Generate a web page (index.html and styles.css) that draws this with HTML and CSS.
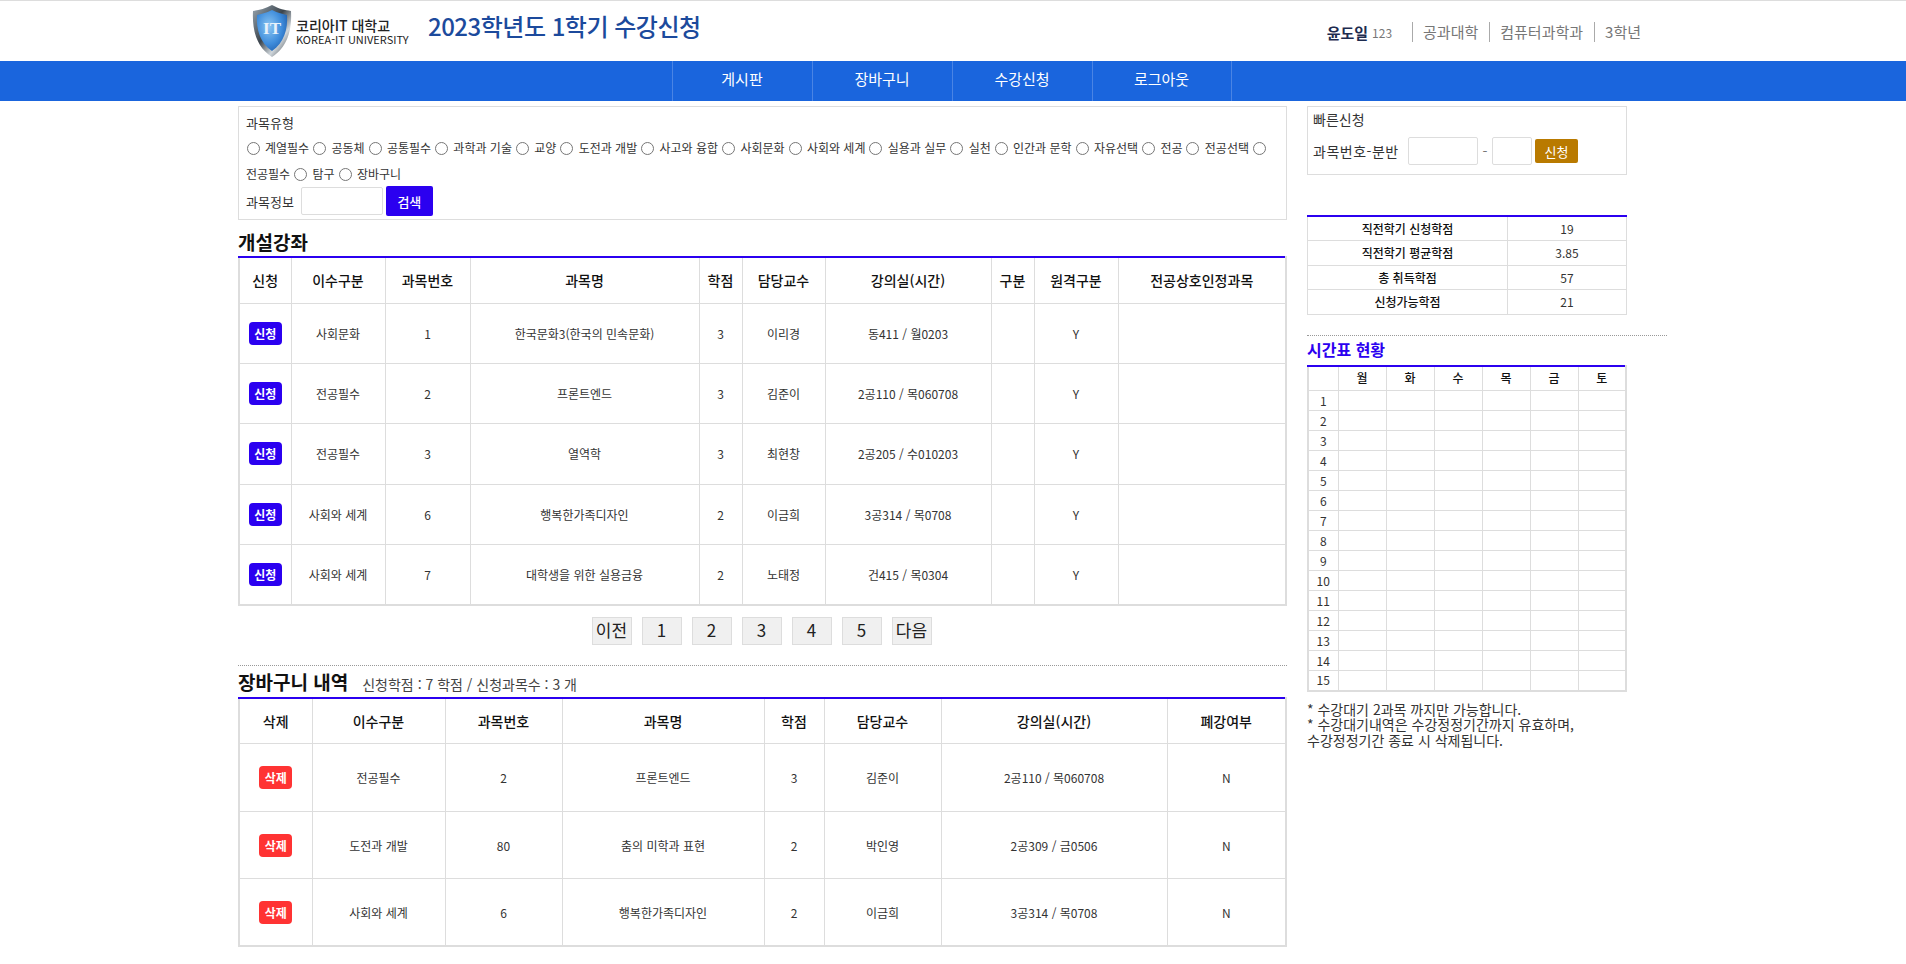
FILE: index.html
```html
<!DOCTYPE html>
<html lang="ko">

<head>
    <meta charset="UTF-8">
    <title>2023학년도 1학기 수강신청</title>
    <link rel="stylesheet" href="styles.css">
</head>

<body>
    <header class="top">
        <div class="wrap top-inner">
            <div class="logo">
                <svg class="shield" viewBox="0 0 40 52" width="40" height="52">
                    <defs>
                        <linearGradient id="metal" x1="0" y1="0" x2="1" y2="1">
                            <stop offset="0" stop-color="#9aa8b3" />
                            <stop offset="0.45" stop-color="#3c454d" />
                            <stop offset="0.7" stop-color="#d0d7dc" />
                            <stop offset="1" stop-color="#23282d" />
                        </linearGradient>
                        <radialGradient id="blue" cx="0.4" cy="0.4" r="0.7">
                            <stop offset="0" stop-color="#8cc6f2" />
                            <stop offset="0.6" stop-color="#3f8ddc" />
                            <stop offset="1" stop-color="#1f5fae" />
                        </radialGradient>
                    </defs>
                    <path d="M20 0 C27 4 33 5 39 6 C40 24 36 42 20 52 C4 42 0 24 1 6 C7 5 13 4 20 0 Z" fill="url(#metal)" />
                    <path d="M20 5 C26 8 31 9 35 10 C36 24 32 38 20 46 C8 38 4 24 5 10 C9 9 14 8 20 5 Z" fill="url(#blue)" />
                    <text x="20" y="29" class="shield-text" text-anchor="middle">IT</text>
                </svg>
                <div class="logo-text">
                    <strong>코리아IT 대학교</strong>
                    <span>KOREA-IT UNIVERSITY</span>
                </div>
            </div>
            <h1 class="page-title">2023학년도 1학기 수강신청</h1>
            <div class="user">
                <b class="user-name">윤도일</b>
                <span class="user-id">123</span>
                <span class="user-item">공과대학</span>
                <span class="user-item">컴퓨터과학과</span>
                <span class="user-item">3학년</span>
            </div>
        </div>
    </header>

    <nav class="nav">
        <a href="#">게시판</a>
        <a href="#">장바구니</a>
        <a href="#">수강신청</a>
        <a href="#">로그아웃</a>
    </nav>

    <div class="wrap content">
        <main class="left">
            <form class="search-box">
                <div class="search-label">과목유형</div>
                <div class="radios">
                    <input type="radio" name="type"> 계열필수
                    <input type="radio" name="type"> 공동체
                    <input type="radio" name="type"> 공통필수
                    <input type="radio" name="type"> 과학과 기술
                    <input type="radio" name="type"> 교양
                    <input type="radio" name="type"> 도전과 개발
                    <input type="radio" name="type"> 사고와 융합
                    <input type="radio" name="type"> 사회문화
                    <input type="radio" name="type"> 사회와 세계
                    <input type="radio" name="type"> 실용과 실무
                    <input type="radio" name="type"> 실천
                    <input type="radio" name="type"> 인간과 문학
                    <input type="radio" name="type"> 자유선택
                    <input type="radio" name="type"> 전공
                    <input type="radio" name="type"> 전공선택
                    <input type="radio" name="type"> 전공필수
                    <input type="radio" name="type"> 탐구
                    <input type="radio" name="type"> 장바구니
                </div>
                <div class="search-row">
                    <span>과목정보</span>
                    <input type="text" class="field field-search">
                    <button type="button" class="btn-search">검색</button>
                </div>
            </form>

            <h2 class="section-title first">개설강좌</h2>
            <table class="grid open-table">
                <thead>
                    <tr>
                        <th class="o1">신청</th>
                        <th class="o2">이수구분</th>
                        <th class="o3">과목번호</th>
                        <th class="o4">과목명</th>
                        <th class="o5">학점</th>
                        <th class="o6">담당교수</th>
                        <th class="o7">강의실(시간)</th>
                        <th class="o8">구분</th>
                        <th class="o9">원격구분</th>
                        <th>전공상호인정과목</th>
                    </tr>
                </thead>
                <tbody>
                    <tr>
                        <td><button class="badge">신청</button></td>
                        <td>사회문화</td>
                        <td>1</td>
                        <td>한국문화3(한국의 민속문화)</td>
                        <td>3</td>
                        <td>이리경</td>
                        <td>동411 / 월0203</td>
                        <td></td>
                        <td>Y</td>
                        <td></td>
                    </tr>
                    <tr>
                        <td><button class="badge">신청</button></td>
                        <td>전공필수</td>
                        <td>2</td>
                        <td>프론트엔드</td>
                        <td>3</td>
                        <td>김준이</td>
                        <td>2공110 / 목060708</td>
                        <td></td>
                        <td>Y</td>
                        <td></td>
                    </tr>
                    <tr>
                        <td><button class="badge">신청</button></td>
                        <td>전공필수</td>
                        <td>3</td>
                        <td>열역학</td>
                        <td>3</td>
                        <td>최현창</td>
                        <td>2공205 / 수010203</td>
                        <td></td>
                        <td>Y</td>
                        <td></td>
                    </tr>
                    <tr>
                        <td><button class="badge">신청</button></td>
                        <td>사회와 세계</td>
                        <td>6</td>
                        <td>행복한가족디자인</td>
                        <td>2</td>
                        <td>이금희</td>
                        <td>3공314 / 목0708</td>
                        <td></td>
                        <td>Y</td>
                        <td></td>
                    </tr>
                    <tr>
                        <td><button class="badge">신청</button></td>
                        <td>사회와 세계</td>
                        <td>7</td>
                        <td>대학생을 위한 실용금융</td>
                        <td>2</td>
                        <td>노태정</td>
                        <td>건415 / 목0304</td>
                        <td></td>
                        <td>Y</td>
                        <td></td>
                    </tr>
                </tbody>
            </table>

            <div class="pager">
                <a href="#">이전</a>
                <a href="#">1</a>
                <a href="#">2</a>
                <a href="#">3</a>
                <a href="#">4</a>
                <a href="#">5</a>
                <a href="#">다음</a>
            </div>

            <hr class="dots">

            <div class="cart-head">
                <h2 class="section-title">장바구니 내역</h2>
                <span class="cart-sum">신청학점 : 7 학점 / 신청과목수 : 3 개</span>
            </div>
            <table class="grid cart-table">
                <thead>
                    <tr>
                        <th class="c1">삭제</th>
                        <th class="c2">이수구분</th>
                        <th class="c3">과목번호</th>
                        <th class="c4">과목명</th>
                        <th class="c5">학점</th>
                        <th class="c6">담당교수</th>
                        <th class="c7">강의실(시간)</th>
                        <th>폐강여부</th>
                    </tr>
                </thead>
                <tbody>
                    <tr>
                        <td><button class="badge badge-red">삭제</button></td>
                        <td>전공필수</td>
                        <td>2</td>
                        <td>프론트엔드</td>
                        <td>3</td>
                        <td>김준이</td>
                        <td>2공110 / 목060708</td>
                        <td>N</td>
                    </tr>
                    <tr>
                        <td><button class="badge badge-red">삭제</button></td>
                        <td>도전과 개발</td>
                        <td>80</td>
                        <td>춤의 미학과 표현</td>
                        <td>2</td>
                        <td>박인영</td>
                        <td>2공309 / 금0506</td>
                        <td>N</td>
                    </tr>
                    <tr>
                        <td><button class="badge badge-red">삭제</button></td>
                        <td>사회와 세계</td>
                        <td>6</td>
                        <td>행복한가족디자인</td>
                        <td>2</td>
                        <td>이금희</td>
                        <td>3공314 / 목0708</td>
                        <td>N</td>
                    </tr>
                </tbody>
            </table>
        </main>

        <aside class="right">
            <div class="quick-box">
                <div class="quick-title">빠른신청</div>
                <div class="quick-row">
                    <span class="quick-label">과목번호-분반</span>
                    <input type="text" class="field field-no">
                    <span class="quick-dash">-</span>
                    <input type="text" class="field field-class">
                    <button type="button" class="btn-quick">신청</button>
                </div>
            </div>

            <table class="stats">
                <tr>
                    <th>직전학기 신청학점</th>
                    <td>19</td>
                </tr>
                <tr>
                    <th>직전학기 평균학점</th>
                    <td>3.85</td>
                </tr>
                <tr>
                    <th>총 취득학점</th>
                    <td>57</td>
                </tr>
                <tr>
                    <th>신청가능학점</th>
                    <td>21</td>
                </tr>
            </table>

            <hr class="dots">

            <h3 class="time-title">시간표 현황</h3>
            <table class="timetable">
                <thead>
                    <tr><th class="t0"></th><th>월</th><th>화</th><th>수</th><th>목</th><th>금</th><th>토</th></tr>
                </thead>
                <tbody>
                    <tr><td>1</td><td></td><td></td><td></td><td></td><td></td><td></td></tr>
                    <tr><td>2</td><td></td><td></td><td></td><td></td><td></td><td></td></tr>
                    <tr><td>3</td><td></td><td></td><td></td><td></td><td></td><td></td></tr>
                    <tr><td>4</td><td></td><td></td><td></td><td></td><td></td><td></td></tr>
                    <tr><td>5</td><td></td><td></td><td></td><td></td><td></td><td></td></tr>
                    <tr><td>6</td><td></td><td></td><td></td><td></td><td></td><td></td></tr>
                    <tr><td>7</td><td></td><td></td><td></td><td></td><td></td><td></td></tr>
                    <tr><td>8</td><td></td><td></td><td></td><td></td><td></td><td></td></tr>
                    <tr><td>9</td><td></td><td></td><td></td><td></td><td></td><td></td></tr>
                    <tr><td>10</td><td></td><td></td><td></td><td></td><td></td><td></td></tr>
                    <tr><td>11</td><td></td><td></td><td></td><td></td><td></td><td></td></tr>
                    <tr><td>12</td><td></td><td></td><td></td><td></td><td></td><td></td></tr>
                    <tr><td>13</td><td></td><td></td><td></td><td></td><td></td><td></td></tr>
                    <tr><td>14</td><td></td><td></td><td></td><td></td><td></td><td></td></tr>
                    <tr><td>15</td><td></td><td></td><td></td><td></td><td></td><td></td></tr>
                </tbody>
            </table>

            <p class="notes">* 수강대기 2과목 까지만 가능합니다.<br>* 수강대기내역은 수강정정기간까지 유효하며,<br>수강정정기간 종료 시 삭제됩니다.</p>
        </aside>
    </div>
</body>

</html>
```

FILE: styles.css
```css
* {
    margin: 0;
    padding: 0;
    box-sizing: border-box;
}

body {
    font-family: "Noto Sans CJK KR", "Noto Sans", sans-serif;
    font-size: 12px;
    color: #333;
    background: #fff;
    border-top: 1px solid #ddd;
}

a {
    color: inherit;
    text-decoration: none;
}

.wrap {
    width: 1430px;
    margin: 0 auto;
}

/* 상단 */
.top-inner {
    height: 60px;
    display: flex;
    align-items: center;
    padding-left: 14px;
}

.logo {
    display: flex;
    align-items: center;
    width: 176px;
    gap: 4px;
}

.shield {
    flex: none;
}

.shield-text {
    font-family: "Liberation Serif", serif;
    font-size: 17px;
    font-weight: 700;
    fill: #e8f2fb;
}

.logo-text {
    display: flex;
    flex-direction: column;
    line-height: 12px;
    color: #222;
}

.logo-text strong {
    font-size: 14px;
    font-weight: 500;
    line-height: 15px;
}

.logo-text span {
    font-size: 11px;
    white-space: nowrap;
}

.page-title {
    font-size: 24px;
    font-weight: 500;
    color: #1c4a9c;
    letter-spacing: -0.5px;
    margin-top: -12px;
}

.user {
    margin-left: auto;
    display: flex;
    align-items: center;
    height: 20px;
    margin-top: 2px;
    margin-right: 27px;
    color: #777;
    font-size: 15px;
}

.user-name {
    font-size: 15px;
    font-weight: 700;
    color: #1d2b4f;
}

.user-id {
    font-size: 12px;
    margin-left: 4px;
    margin-right: 20px;
}

.user-item {
    border-left: 1px solid #aaa;
    padding: 0 11px 0 10px;
    line-height: 20px;
}

.user-item:last-child {
    padding-right: 0;
}

/* 메뉴 */
.nav {
    height: 40px;
    background: #1a65dd;
    display: flex;
    justify-content: center;
    padding-right: 3px;
}

.nav a {
    width: 140px;
    border-left: 1px solid #4a84e4;
    color: #fff;
    font-size: 15px;
    text-align: center;
    line-height: 36px;
}

.nav a:last-child {
    border-right: 1px solid #4a84e4;
}

/* 본문 */
.content {
    display: flex;
    gap: 20px;
    padding-top: 5px;
    padding-bottom: 16px;
}

.left {
    width: 1049px;
}

.right {
    width: 360px;
}

.search-box {
    height: 114px;
    border: 1px solid #ddd;
    padding: 6px 0 0 7px;
}

.search-label {
    font-size: 13px;
    line-height: 20px;
    margin-bottom: 2px;
}

.radios {
    line-height: 26px;
    height: 51px;
    word-break: keep-all;
}

.radios input {
    width: 13px;
    height: 13px;
    margin: 0 2px 0 0.6px;
    vertical-align: -2px;
}

.search-row {
    display: flex;
    align-items: center;
    font-size: 13px;
    height: 30px;
}

.field {
    border: 1px solid #ddd;
    border-radius: 2px;
    height: 28px;
    background: #fff;
}

.field-search {
    width: 82px;
    margin-left: 7px;
}

.btn-search {
    width: 47px;
    height: 30px;
    margin-left: 3px;
    border: 0;
    border-radius: 2px;
    background: #2b00f0;
    color: #fff;
    font: inherit;
    font-weight: 500;
}

.section-title {
    font-size: 19px;
    font-weight: 700;
    color: #111;
    line-height: 26px;
}

.section-title.first {
    margin-top: 9px;
    height: 27px;
}

/* 표 */
.grid {
    width: 100%;
    table-layout: fixed;
    border-collapse: collapse;
    border: 2px solid #ddd;
    border-top: 2px solid #2b00f0;
    text-align: center;
}

.grid th,
.grid td {
    border: 1px solid #ddd;
}

.grid th {
    font-size: 14px;
    font-weight: 500;
    color: #111;
    height: 46px;
}

.open-table td {
    height: 60.4px;
}

.cart-table td {
    height: 67.4px;
}

.o1 { width: 52px; }
.o2 { width: 94px; }
.o3 { width: 85px; }
.o4 { width: 229px; }
.o5 { width: 43px; }
.o6 { width: 83px; }
.o7 { width: 166px; }
.o8 { width: 43px; }
.o9 { width: 84px; }

.c1 { width: 73px; }
.c2 { width: 133px; }
.c3 { width: 117px; }
.c4 { width: 202px; }
.c5 { width: 60px; }
.c6 { width: 117px; }
.c7 { width: 226px; }

.badge {
    width: 33px;
    height: 23px;
    border: 0;
    border-radius: 4px;
    background: #2b00f0;
    color: #fff;
    font: inherit;
    font-weight: 700;
}

.badge-red {
    background: #ff3333;
}

/* 페이지 */
.pager {
    display: flex;
    justify-content: center;
    gap: 10px;
    margin-top: 11px;
    padding-right: 2px;
}

.pager a {
    width: 40px;
    height: 28px;
    border: 1px solid #ddd;
    background: #f0f0f0;
    font-size: 17px;
    color: #222;
    text-align: center;
    line-height: 24px;
}

.dots {
    border: 0;
    border-top: 1px dotted #999;
    margin-top: 20px;
}

.cart-head {
    display: flex;
    align-items: baseline;
    height: 31px;
    padding-top: 3px;
}

.cart-sum {
    font-size: 14px;
    color: #444;
    margin-left: 14px;
}

/* 오른쪽 */
.quick-box {
    width: 320px;
    height: 69px;
    border: 1px solid #ddd;
    padding: 2px 0 0 5px;
}

.quick-title {
    font-size: 14px;
    line-height: 20px;
}

.quick-row {
    display: flex;
    align-items: center;
    font-size: 14px;
    margin-top: 8px;
}

.quick-label {
    width: 95px;
    letter-spacing: 0.5px;
    white-space: nowrap;
}

.field-no {
    width: 70px;
}

.quick-dash {
    width: 14px;
    text-align: center;
    color: #777;
}

.field-class {
    width: 40px;
}

.btn-quick {
    width: 43px;
    height: 24px;
    margin-left: 3px;
    border: 0;
    border-radius: 2px;
    background: #b97a00;
    color: #fff;
    font: inherit;
    font-size: 13px;
}

.stats {
    width: 320px;
    table-layout: fixed;
    border-collapse: collapse;
    border-top: 2px solid #2b00f0;
    margin-top: 40px;
    text-align: center;
}

.stats th,
.stats td {
    border: 1px solid #ddd;
    height: 24.5px;
    font-size: 12px;
}

.stats th {
    width: 200px;
    font-weight: 500;
    color: #111;
}

.right .dots {
    margin-top: 20px;
}

.time-title {
    font-size: 16px;
    font-weight: 700;
    color: #2b00f0;
    line-height: 27px;
    height: 29px;
}

.timetable {
    width: 320px;
    table-layout: fixed;
    border-collapse: collapse;
    border: 2px solid #ddd;
    border-top: 2px solid #2b00f0;
    text-align: center;
}

.timetable th,
.timetable td {
    border: 1px solid #ddd;
    height: 20px;
    font-size: 12px;
    line-height: 14px;
}

.timetable th {
    height: 25px;
    font-weight: 500;
    color: #111;
}

.t0 {
    width: 30px;
}

.notes {
    margin-top: 10px;
    font-size: 14px;
    line-height: 15.5px;
    color: #333;
}
```
